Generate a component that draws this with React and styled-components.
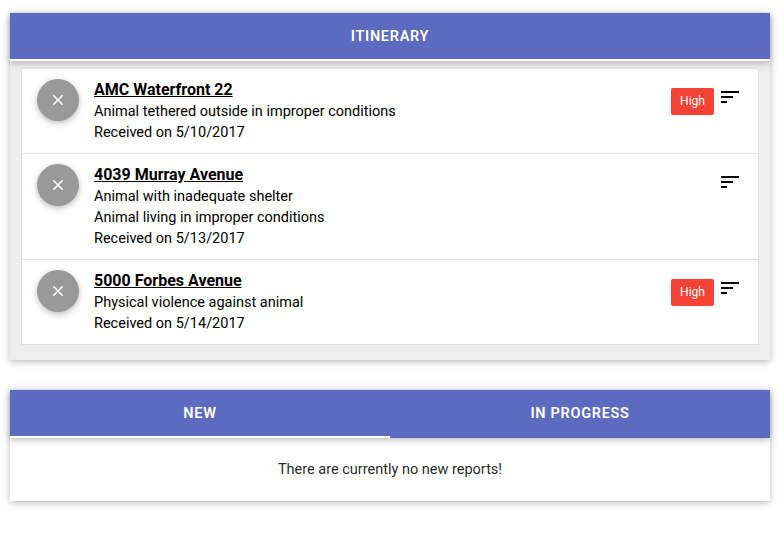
import React from "react";
import styled, { createGlobalStyle } from "styled-components";

const GlobalStyle = createGlobalStyle`
  *, *::before, *::after { box-sizing: border-box; }
  body {
    margin: 0;
    background: #fff;
    color: rgba(0, 0, 0, 0.87);
    font-family: Roboto, "Liberation Sans", sans-serif;
    font-size: 14.5px;
    line-height: 21px;
  }
`;

const Page = styled.main`
  display: flex;
  flex-direction: column;
  gap: 30px;
  padding: 13px 14px 34px 10px;
`;

const Card = styled.section`
  background: ${({ $muted }) => ($muted ? "#eee" : "#fff")};
  box-shadow: 0 2px 5px 0 rgba(0, 0, 0, 0.16), 0 2px 10px 0 rgba(0, 0, 0, 0.12);
`;

const Tabs = styled.div`
  display: flex;
  height: 48px;
  background: #5c6bc0;
  box-shadow: 0 2px 5px 0 rgba(0, 0, 0, 0.16), 0 2px 10px 0 rgba(0, 0, 0, 0.12);
`;

const Tab = styled.button`
  flex: 1;
  height: 48px;
  padding: 1px 0 0;
  border: 0;
  border-bottom: 2px solid ${({ $active }) => ($active ? "#fff" : "#5c6bc0")};
  background: none;
  color: #fff;
  font: 600 14.5px/45px Roboto, "Liberation Sans", sans-serif;
  letter-spacing: 0.7px;
  text-transform: uppercase;
`;

const Collection = styled.ul`
  list-style: none;
  margin: 0;
  padding: 0;
  border: 1px solid #e0e0e0;
  background: #fff;
`;

const CollectionArea = styled.div`
  padding: 7px 11px 15px;
`;

const Row = styled.li`
  display: flex;
  align-items: flex-start;
  box-sizing: content-box;
  min-height: ${({ $tall }) => ($tall ? 95 : 74)}px;
  padding: 10px 16px 0 15px;
  color: #000;

  & + & { border-top: 1px solid #e0e0e0; }
`;

const RemoveButton = styled.button`
  display: flex;
  align-items: center;
  justify-content: center;
  width: 42px;
  height: 42px;
  margin-right: 15px;
  padding: 0;
  border: 0;
  border-radius: 50%;
  background: #999;
  color: #fff;
  box-shadow: 0 2px 5px 0 rgba(0, 0, 0, 0.16), 0 2px 10px 0 rgba(0, 0, 0, 0.12);
`;

const Details = styled.div`
  flex: 1;
`;

const Title = styled.a`
  display: block;
  height: 22px;
  font-size: 16px;
  font-weight: 700;
  text-decoration: underline;
`;

const Line = styled.p`
  margin: 0;
`;

const Actions = styled.div`
  display: flex;
  align-items: flex-start;
  padding-top: 6px;
`;

const Priority = styled.span`
  width: 43px;
  height: 27px;
  margin: 3px 4px 0 0;
  border-radius: 2px;
  background: #f44336;
  color: #fff;
  font-size: 12px;
  line-height: 27px;
  text-align: center;
`;

const Glyph = styled.svg`
  display: block;
  width: ${({ $size }) => $size}px;
  height: ${({ $size }) => $size}px;
  fill: currentColor;
`;

const Message = styled.p`
  margin: 0;
  padding: 21px 0;
  text-align: center;
`;

const CloseIcon = () => (
  <Glyph $size={18} viewBox="0 0 24 24">
    <path d="M19 6.41 17.59 5 12 10.59 6.41 5 5 6.41 10.59 12 5 17.59 6.41 19 12 13.41 17.59 19 19 17.59 13.41 12z" />
  </Glyph>
);

const SortIcon = () => (
  <Glyph $size={24} viewBox="0 0 24 24">
    <path d="M3 18h6v-2H3v2zM3 6v2h18V6H3zm0 7h12v-2H3v2z" />
  </Glyph>
);

const stops = [
  {
    place: "AMC Waterfront 22",
    issues: ["Animal tethered outside in improper conditions"],
    received: "5/10/2017",
    high: true,
  },
  {
    place: "4039 Murray Avenue",
    issues: ["Animal with inadequate shelter", "Animal living in improper conditions"],
    received: "5/13/2017",
  },
  {
    place: "5000 Forbes Avenue",
    issues: ["Physical violence against animal"],
    received: "5/14/2017",
    high: true,
  },
];

export default function App() {
  return (
    <>
      <GlobalStyle />
      <Page>
        <Card $muted>
          <Tabs>
            <Tab $active>Itinerary</Tab>
          </Tabs>
          <CollectionArea>
            <Collection>
              {stops.map((stop) => (
                <Row key={stop.place} $tall={stop.issues.length > 1}>
                  <RemoveButton aria-label="Remove">
                    <CloseIcon />
                  </RemoveButton>
                  <Details>
                    <Title>{stop.place}</Title>
                    {stop.issues.map((issue) => (
                      <Line key={issue}>{issue}</Line>
                    ))}
                    <Line>Received on {stop.received}</Line>
                  </Details>
                  <Actions>
                    {stop.high && <Priority>High</Priority>}
                    <SortIcon />
                  </Actions>
                </Row>
              ))}
            </Collection>
          </CollectionArea>
        </Card>
        <Card>
          <Tabs>
            <Tab $active>New</Tab>
            <Tab>In Progress</Tab>
          </Tabs>
          <Message>There are currently no new reports!</Message>
        </Card>
      </Page>
    </>
  );
}
